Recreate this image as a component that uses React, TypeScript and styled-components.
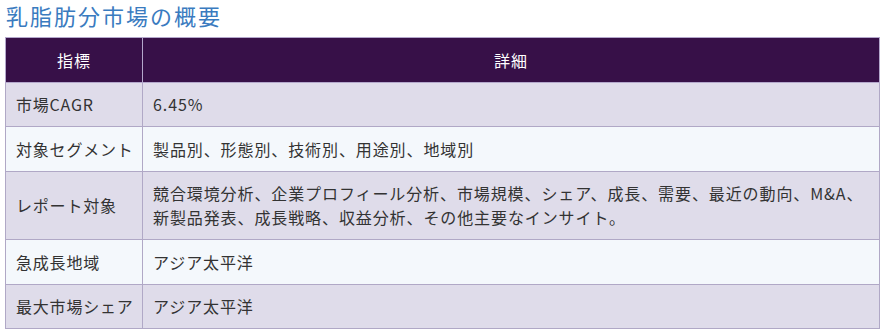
import React from 'react';
import styled, { createGlobalStyle } from 'styled-components';

const GlobalStyle = createGlobalStyle`
  body {
    margin: 0;
    background: #ffffff;
    font-family: "Noto Sans CJK JP", "Noto Sans", sans-serif;
  }
`

const Page = styled.div`
  padding: 0 6px 0 5px;
`

const Title = styled.h2`
  margin: 0;
  padding: 0 0 0 1px;
  height: 37px;
  font-size: 22px;
  font-weight: 400;
  letter-spacing: 2px;
  line-height: 30px;
  color: #3a7bbf;
`

const Table = styled.table`
  width: 875px;
  border-collapse: collapse;
  table-layout: fixed;
  font-size: 16px;
  line-height: 24px;
  color: #333333;
`

const HeadCell = styled.th`
  background: #371048;
  color: #ffffff;
  font-weight: 400;
  letter-spacing: 1px;
  text-align: center;
  padding: 9.75px 10px;
  border: 1px solid #b4a8cc;
`

const Row = styled.tr<{ $odd: boolean }>`
  background: ${p => (p.$odd ? '#dfdcea' : '#f4f8fc')};
`

const Cell = styled.td<{ $key?: boolean }>`
  padding: 9.75px 10px;
  border: 1px solid #b0a8c6;
  vertical-align: middle;
  white-space: pre;
  overflow: hidden;
  letter-spacing: ${p => (p.$key ? '0.8px' : '0.9px')};
`

const rows: [string, string][] = [
    ['市場CAGR', '6.45%'],
    ['対象セグメント', '製品別、形態別、技術別、用途別、地域別'],
    ['レポート対象', '競合環境分析、企業プロフィール分析、市場規模、シェア、成長、需要、最近の動向、M&A、\n新製品発表、成長戦略、収益分析、その他主要なインサイト。'],
    ['急成長地域', 'アジア太平洋'],
    ['最大市場シェア', 'アジア太平洋'],
]

const App = () => {
    return (
        <Page>
            <GlobalStyle />
            <Title>乳脂肪分市場の概要</Title>
            <Table>
                <colgroup>
                    <col style={{ width: '137px' }} />
                    <col />
                </colgroup>
                <thead>
                    <tr>
                        <HeadCell>指標</HeadCell>
                        <HeadCell>詳細</HeadCell>
                    </tr>
                </thead>
                <tbody>
                    {rows.map(([k, v], i) => (
                        <Row key={k} $odd={i % 2 === 0}>
                            <Cell $key>{k}</Cell>
                            <Cell>{v}</Cell>
                        </Row>
                    ))}
                </tbody>
            </Table>
        </Page>
    )
}

export default App
